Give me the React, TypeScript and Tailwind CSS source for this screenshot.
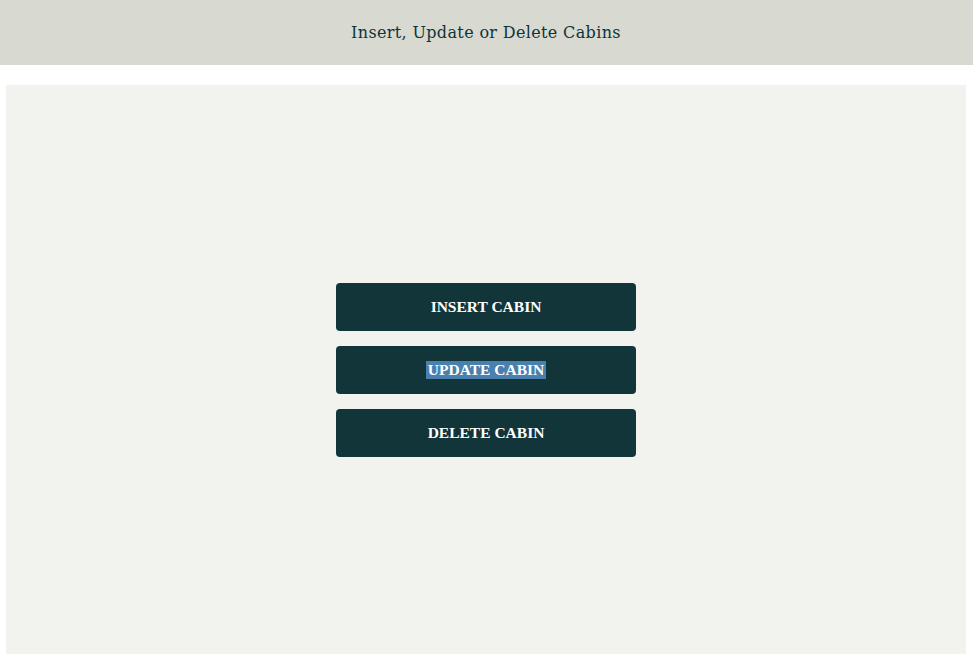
export default function App() {
  const serif = { fontFamily: '"DejaVu Serif", serif' };
  const btnFont = { fontFamily: '"Liberation Serif", serif' };
  return (
    <div className="w-[973px] h-[658px] bg-white" style={serif}>
      <header className="h-[65px] bg-[#d8d9d0] flex items-center justify-center">
        <h1 className="text-[16px] text-[#0f3338] tracking-[0.35px] pr-[1px]">Insert, Update or Delete Cabins</h1>
      </header>
      <main className="mt-[20px] ml-[6px] w-[960px] h-[569px] bg-[#f2f3ef] flex flex-col items-center justify-center gap-[15px]" style={btnFont}>
        <button className="w-[300px] h-[48px] rounded-[4px] bg-[#12353a] text-white text-[15.5px] font-bold">INSERT CABIN</button>
        <button className="w-[300px] h-[48px] rounded-[4px] bg-[#12353a] text-white text-[15.5px] font-bold">
          <span className="inline-block h-[18px] leading-[18px] px-[2px] bg-[#4a80ad]">UPDATE CABIN</span>
        </button>
        <button className="w-[300px] h-[48px] rounded-[4px] bg-[#12353a] text-white text-[15.5px] font-bold">DELETE CABIN</button>
      </main>
    </div>
  );
}
